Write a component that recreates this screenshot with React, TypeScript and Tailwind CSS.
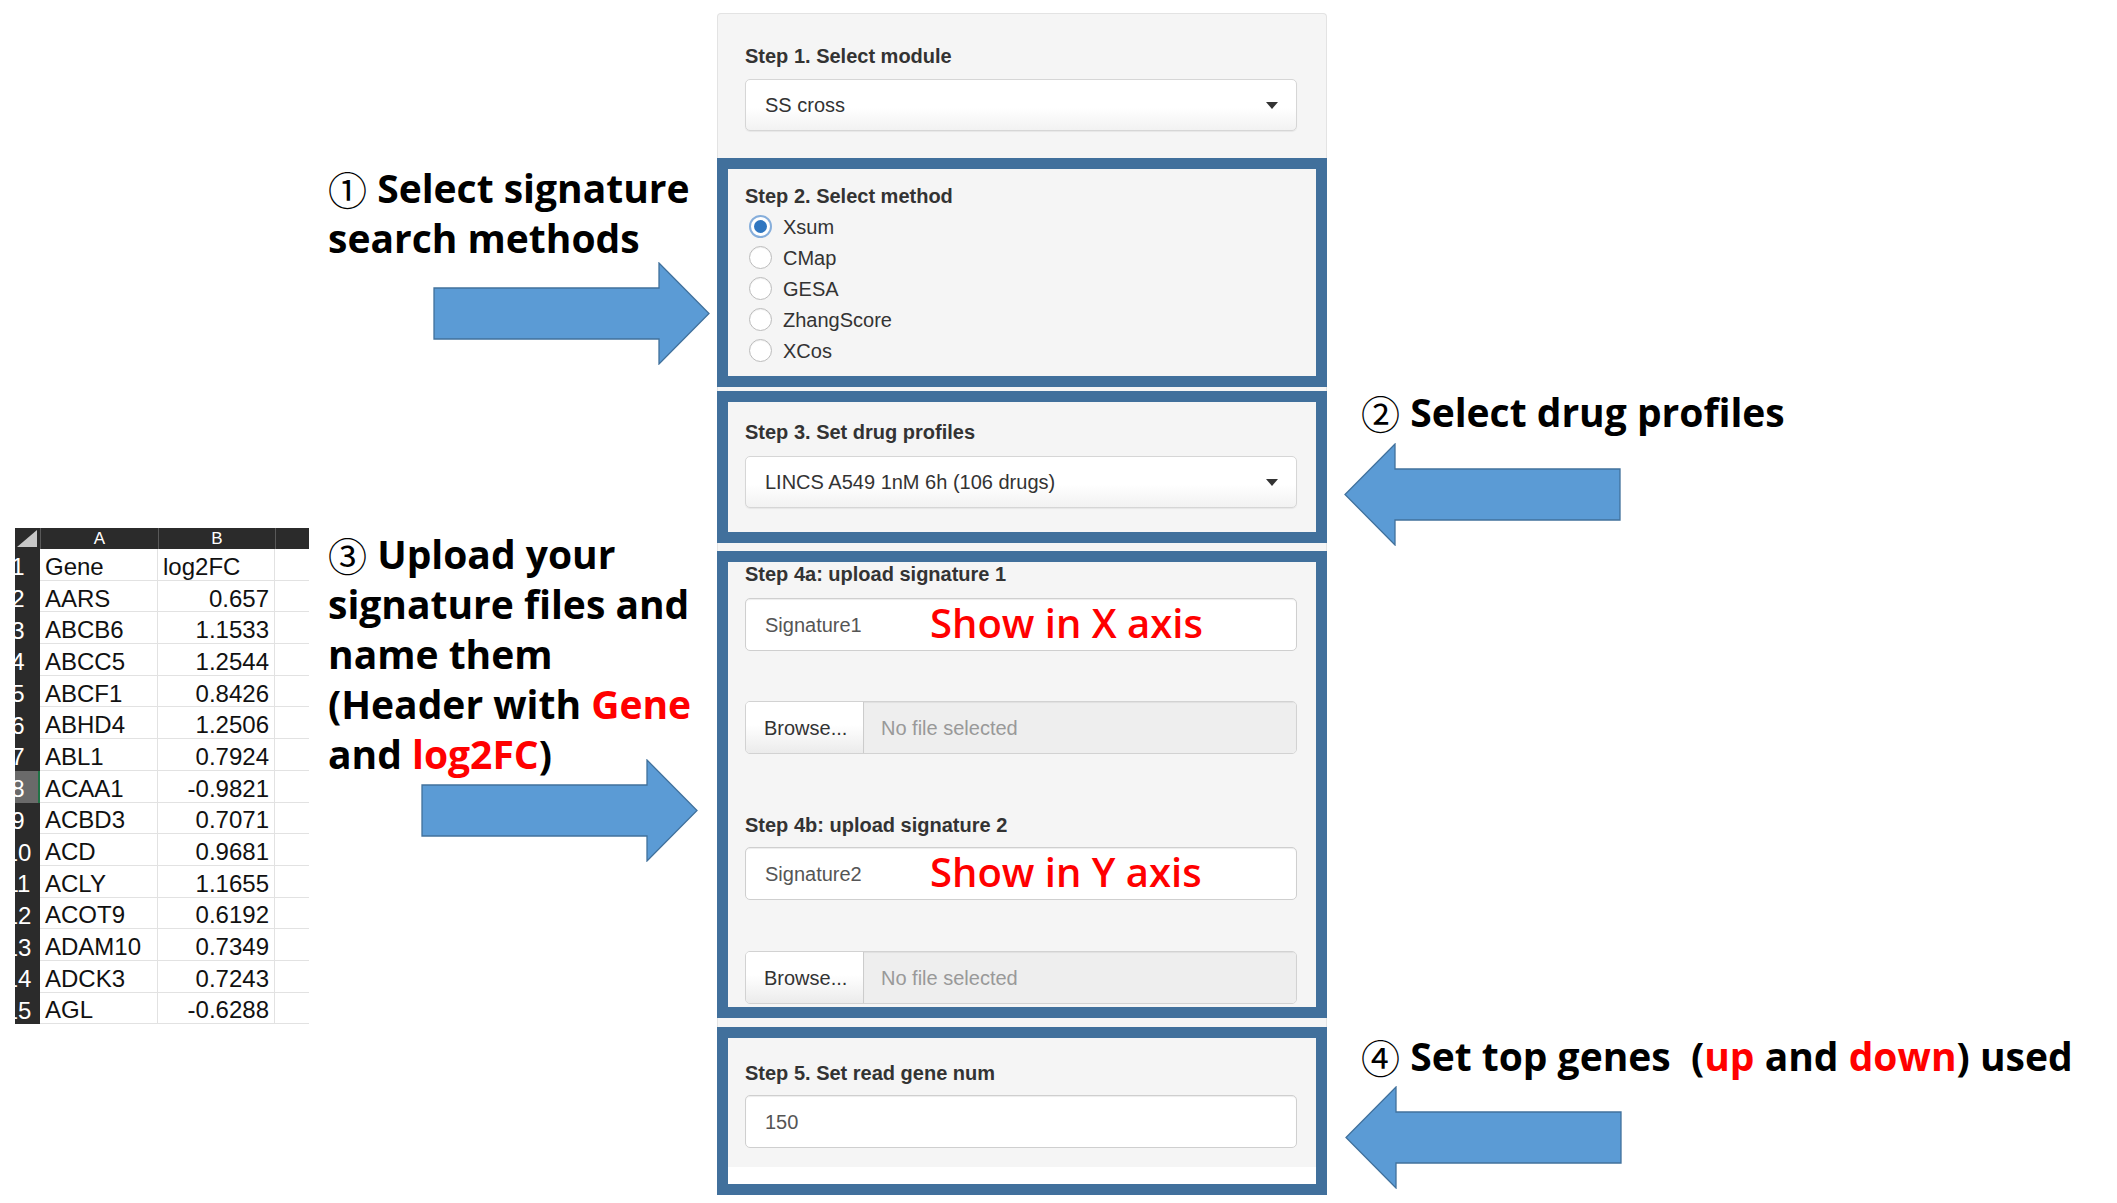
import React from "react";

const ARROW_FILL = "#5b9bd5";
const ARROW_STROKE = "#41719c";

function Arrow({ dir }: { dir: "right" | "left" }) {
  const pts =
    dir === "right"
      ? "1,26 226,26 226,1 276,51.5 226,102 226,77 1,77"
      : "276,26 51,26 51,1 1,51.5 51,102 51,77 276,77";
  return (
    <svg width="277" height="103" viewBox="0 0 277 103" className="block">
      <polygon points={pts} fill={ARROW_FILL} stroke={ARROW_STROKE} strokeWidth="1.3" />
    </svg>
  );
}

function Circ({ c }: { c: string }) {
  return (
    <span className="inline-block align-top h-[50px] leading-[50px] font-['Noto_Sans_CJK_SC',sans-serif] font-normal">
      {c}
    </span>
  );
}

function Label({ children, cls = "" }: { children: React.ReactNode; cls?: string }) {
  return (
    <div className={"text-[20px] font-bold text-[#333] leading-[24px] font-['Liberation_Sans',Arial,sans-serif] " + cls}>
      {children}
    </div>
  );
}

function SelectBox({ text, cls = "" }: { text: string; cls?: string }) {
  return (
    <div
      className={
        "h-[52px] w-[552px] rounded-[5px] border border-[#d6d6d6] bg-[linear-gradient(to_bottom,#ffffff_55%,#f2f2f2)] shadow-[0_1px_1px_rgba(0,0,0,0.06)] flex items-center pl-[19px] pr-[18px] text-[20px] text-[#333] font-['Liberation_Sans',Arial,sans-serif] " +
        cls
      }
    >
      <span>{text}</span>
      <span className="ml-auto w-0 h-0 border-l-[6px] border-r-[6px] border-t-[7px] border-l-transparent border-r-transparent border-t-[#333]" />
    </div>
  );
}

function TextInput({ text, note, cls = "" }: { text: string; note?: string; cls?: string }) {
  return (
    <div
      className={
        "h-[53px] w-[552px] rounded-[5px] border border-[#cfcfcf] bg-white shadow-[inset_0_1px_1px_rgba(0,0,0,0.075)] flex items-center pl-[19px] text-[20px] text-[#555] font-['Liberation_Sans',Arial,sans-serif] " +
        cls
      }
    >
      <span className={note ? "w-[165px] shrink-0" : ""}>{text}</span>
      {note && (
        <span className="font-['Open_Sans',sans-serif] font-semibold text-[40px] leading-[40px] text-[#ff0000] -mt-[4px]">
          {note}
        </span>
      )}
    </div>
  );
}

function FileInput({ cls = "" }: { cls?: string }) {
  return (
    <div
      className={
        "h-[53px] w-[552px] rounded-[5px] border border-[#d2d2d2] flex overflow-hidden text-[20px] font-['Liberation_Sans',Arial,sans-serif] " +
        cls
      }
    >
      <div className="w-[118px] h-full flex items-center pl-[18px] bg-[linear-gradient(to_bottom,#ffffff_45%,#ebebeb)] text-[#333] border-r border-[#cccccc]">
        Browse...
      </div>
      <div className="flex-1 h-full flex items-center pl-[17px] bg-[#eeeeee] text-[#999] shadow-[inset_0_1px_1px_rgba(0,0,0,0.06)]">
        No file selected
      </div>
    </div>
  );
}

function Radio({ checked, label }: { checked?: boolean; label: string }) {
  return (
    <div className="h-[31px] flex items-center">
      {checked ? (
        <span className="ml-[4px] w-[23px] h-[23px] rounded-full border-2 border-[#86aedb] bg-white flex items-center justify-center">
          <span className="w-[13px] h-[13px] rounded-full bg-[#2f76c0]" />
        </span>
      ) : (
        <span className="ml-[4px] w-[23px] h-[23px] rounded-full border-[1.5px] border-[#bcbcbc] bg-white shadow-[inset_0_1px_1px_rgba(0,0,0,0.06)]" />
      )}
      <span className="ml-[11px] text-[20px] text-[#333] font-['Liberation_Sans',Arial,sans-serif]">{label}</span>
    </div>
  );
}

const rows: [string, string][] = [
  ["AARS", "0.657"],
  ["ABCB6", "1.1533"],
  ["ABCC5", "1.2544"],
  ["ABCF1", "0.8426"],
  ["ABHD4", "1.2506"],
  ["ABL1", "0.7924"],
  ["ACAA1", "-0.9821"],
  ["ACBD3", "0.7071"],
  ["ACD", "0.9681"],
  ["ACLY", "1.1655"],
  ["ACOT9", "0.6192"],
  ["ADAM10", "0.7349"],
  ["ADCK3", "0.7243"],
  ["AGL", "-0.6288"],
];

function Sheet() {
  const all: [string, string][] = [["Gene", "log2FC"], ...rows];
  return (
    <div className="w-[294px] font-['Liberation_Sans',Arial,sans-serif] text-[24px] text-[#111]">
      <div className="h-[21px] flex bg-[#2b2b2b] text-white text-[17px] leading-[21px] overflow-hidden">
        <div className="w-[25px] h-full">
          <svg width="25" height="21" className="block">
            <polygon points="2,19 22,2 22,19" fill="#c8c8c8" />
          </svg>
        </div>
        <div className="w-[118px] h-full text-center border-l border-[#595959]">A</div>
        <div className="w-[117px] h-full text-center border-l border-[#595959]">B</div>
        <div className="flex-1 h-full border-l border-[#595959]" />
      </div>
      {all.map((r, i) => {
        const n = i + 1;
        const active = n === 8;
        return (
          <div key={i} className="h-[31.7px] flex leading-[27px]">
            <div
              className={
                "w-[25px] h-full overflow-hidden flex items-center pt-[4px] text-white " +
                (active ? "bg-[#6a6a6a] border-r-2 border-[#217346]" : "bg-[#2b2b2b]")
              }
            >
              <div className="w-[30px] -ml-[12px] shrink-0 text-center">{n}</div>
            </div>
            <div className="w-[118px] h-full flex items-center pt-[4px] pl-[5px] border-b border-r border-[#e2e2e2] bg-white">
              {r[0]}
            </div>
            <div
              className={
                "w-[117px] h-full flex items-center pt-[4px] border-b border-r border-[#e2e2e2] bg-white " +
                (i === 0 ? "pl-[5px]" : "justify-end pr-[5px]")
              }
            >
              {r[1]}
            </div>
            <div className="flex-1 h-full border-b border-[#e2e2e2] bg-white" />
          </div>
        );
      })}
    </div>
  );
}

export default function App() {
  const note = "font-['Open_Sans',sans-serif] font-bold text-[39px] leading-[50px] text-black";
  const red = "text-[#ff0000]";
  const boxBorder = "border-[11px] border-[#41709c]";
  const gap = "bg-[#f5f5f5] border-x border-[#e3e3e3]";
  return (
    <div className="w-[2117px] h-[1203px] bg-white flex overflow-hidden">
      {/* Spreadsheet */}
      <div className="ml-[15px] mt-[528px]">
        <Sheet />
      </div>

      {/* Left annotations */}
      <div className="w-[408px] shrink-0 flex flex-col">
        <div className={"ml-[19px] mt-[163px] " + note}>
          <div className="h-[50px]">
            <Circ c="①" /> Select signature
          </div>
          <div>search methods</div>
        </div>
        <div className="ml-[124px] -mt-[1px]">
          <Arrow dir="right" />
        </div>
        <div className={"ml-[19px] mt-[164px] " + note}>
          <div className="h-[50px]">
            <Circ c="③" /> Upload your
          </div>
          <div>signature files and</div>
          <div>name them</div>
          <div>
            (Header with <span className={red}>Gene</span>
          </div>
          <div>
            and <span className={red}>log2FC</span>)
          </div>
        </div>
        <div className="ml-[112px] -mt-[20px]">
          <Arrow dir="right" />
        </div>
      </div>

      {/* Shiny panel */}
      <div className="w-[610px] shrink-0 mt-[13px] flex flex-col">
        <div className="h-[145px] bg-[#f5f5f5] border-t border-x border-[#e3e3e3] rounded-t-[4px] pl-[27px] pt-[30px]">
          <Label>Step 1. Select module</Label>
          <SelectBox text="SS cross" cls="mt-[11px]" />
        </div>

        <div className={"h-[229px] bg-[#f5f5f5] pl-[17px] pt-[15px] " + boxBorder}>
          <Label>Step 2. Select method</Label>
          <div className="mt-[3px]">
            <Radio checked label="Xsum" />
            <Radio label="CMap" />
            <Radio label="GESA" />
            <Radio label="ZhangScore" />
            <Radio label="XCos" />
          </div>
        </div>

        <div className={"h-[4px] " + gap} />

        <div className={"h-[152px] bg-[#f5f5f5] pl-[17px] pt-[18px] " + boxBorder}>
          <Label>Step 3. Set drug profiles</Label>
          <SelectBox text="LINCS A549 1nM 6h (106 drugs)" cls="mt-[12px]" />
        </div>

        <div className={"h-[8px] " + gap} />

        <div className={"h-[467px] bg-[#f5f5f5] pl-[17px] " + boxBorder}>
          <Label cls="leading-[20px]">Step 4a: upload signature 1</Label>
          <TextInput text="Signature1" note="Show in X axis" cls="mt-[12px]" />
          <FileInput cls="mt-[50px]" />
          <Label cls="mt-[59px]">Step 4b: upload signature 2</Label>
          <TextInput text="Signature2" note="Show in Y axis" cls="mt-[10px]" />
          <FileInput cls="mt-[51px]" />
        </div>

        <div className={"h-[9px] " + gap} />

        <div className={"h-[168px] flex flex-col " + boxBorder}>
          <div className="h-[129px] bg-[#f5f5f5] pl-[17px] pt-[23px]">
            <Label>Step 5. Set read gene num</Label>
            <TextInput text="150" cls="mt-[10px]" />
          </div>
          <div className="flex-1 bg-white" />
        </div>
      </div>

      {/* Right annotations */}
      <div className="flex-1 flex flex-col">
        <div className={"ml-[34px] mt-[387px] " + note}>
          <div className="h-[50px]">
            <Circ c="②" /> Select drug profiles
          </div>
        </div>
        <div className="ml-[17px] mt-[6px]">
          <Arrow dir="left" />
        </div>
        <div className={"ml-[34px] mt-[485px] h-[50px] whitespace-pre " + note}>
          <Circ c="④" /> Set top genes  (<span className={red}>up</span> and{" "}
          <span className={red}>down</span>) used
        </div>
        <div className="ml-[18px] mt-[5px]">
          <Arrow dir="left" />
        </div>
      </div>
    </div>
  );
}
